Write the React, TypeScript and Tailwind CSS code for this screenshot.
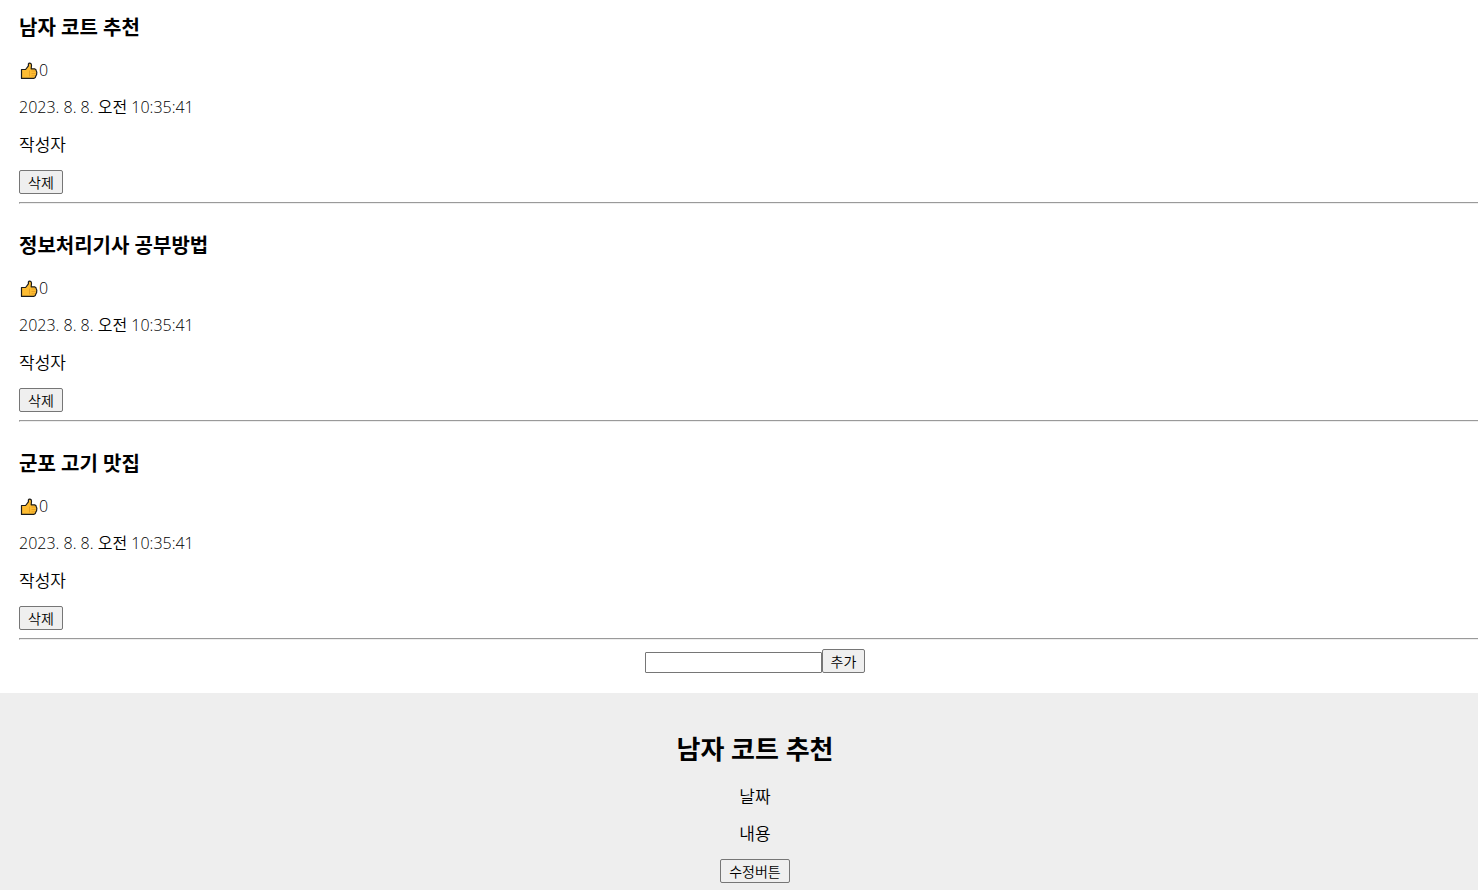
import { useState } from 'react'

interface Post {
  id: number
  title: string
  likes: number
}

const initialPosts: Post[] = [
  { id: 1, title: '남자 코트 추천', likes: 0 },
  { id: 2, title: '정보처리기사 공부방법', likes: 0 },
  { id: 3, title: '군포 고기 맛집', likes: 0 },
]

const CREATED_AT = '2023. 8. 8. 오전 10:35:41'

const buttonClass =
  'h-6 shrink-0 rounded-[2px] border border-[#767676] bg-[#efefef] px-2 text-[14px] leading-[21px]'

function ThumbsUp() {
  return (
    <svg viewBox="0 0 18 18" className="h-[18px] w-[18px]" aria-hidden="true">
      <path
        d="M1.5 7.5H5.6L8.4 3.8V2Q8.8 0.9 10 1.1Q11.6 1.5 11.5 3.2L11.2 6.8H14.6Q16.4 7.2 16.2 8.8Q17.2 9.8 16.7 11.3Q16.9 13 15.9 13.8Q15.6 15.9 13.8 16.4H1.5Z"
        fill="#fdbc32"
        stroke="#1c1c1c"
        strokeWidth="1.2"
        strokeLinejoin="round"
      />
      <path d="M11.5 9H15.2M11.5 11.5H15.6M11.5 13.8H15M9.5 8.5V14.5" fill="none" stroke="#e09a22" strokeWidth="0.8" />
    </svg>
  )
}

interface PostItemProps {
  post: Post
  onLike: () => void
  onDelete: () => void
}

function PostItem({ post, onLike, onDelete }: PostItemProps) {
  return (
    <li>
      <h3 className="text-[20px] font-bold leading-[25px]">{post.title}</h3>
      <p className="mt-5 flex h-[21px] items-center text-[16px]">
        <button type="button" aria-label="like" onClick={onLike} className="mx-px">
          <ThumbsUp />
        </button>
        {post.likes}
      </p>
      <p className="mt-4 text-[16px]">{CREATED_AT}</p>
      <p className="mt-4">작성자</p>
      <button type="button" onClick={onDelete} className={`mt-[15px] block ${buttonClass}`}>
        삭제
      </button>
      <hr className="mt-2 h-[2px] border-t border-b border-l border-t-[#9a9a9a] border-b-[#eeeeee] border-l-[#9a9a9a]" />
    </li>
  )
}

export default function App() {
  const [posts, setPosts] = useState(initialPosts)
  const [title, setTitle] = useState('')

  const like = (id: number) => {
    setPosts(posts.map((p) => (p.id === id ? { ...p, likes: p.likes + 1 } : p)))
  }

  const add = () => {
    if (!title) return
    setPosts([...posts, { id: Date.now(), title, likes: 0 }])
    setTitle('')
  }

  return (
    <div className="flex min-h-screen flex-col bg-white font-['Open_Sans','Noto_Sans_CJK_KR',sans-serif] text-[17px] font-[350] leading-[21px] text-black">
      <ul className="flex flex-col gap-[29px] pt-[15px] pl-[19px]">
        {posts.map((post) => (
          <PostItem
            key={post.id}
            post={post}
            onLike={() => like(post.id)}
            onDelete={() => setPosts(posts.filter((p) => p.id !== post.id))}
          />
        ))}
      </ul>

      <form
        className="flex items-end justify-center pt-[9px] pb-5 pl-8"
        onSubmit={(e) => {
          e.preventDefault()
          add()
        }}
      >
        <input
          aria-label="글 제목"
          value={title}
          onChange={(e) => setTitle(e.target.value)}
          className="h-[21px] w-[177px] rounded-[1px] border border-[#767676] bg-white px-[3px] text-[14px]"
        />
        <button type="submit" className={buttonClass}>
          추가
        </button>
      </form>

      {/* detail */}
      <section className="flex grow flex-col items-center bg-[#eeeeee] pt-10 pb-1 pl-8">
        <h2 className="text-[26px] font-bold leading-[33px]">남자 코트 추천</h2>
        <p className="mt-5">날짜</p>
        <p className="mt-4">내용</p>
        <button type="button" className={`mt-[15px] ${buttonClass}`}>
          수정버튼
        </button>
      </section>
    </div>
  )
}
